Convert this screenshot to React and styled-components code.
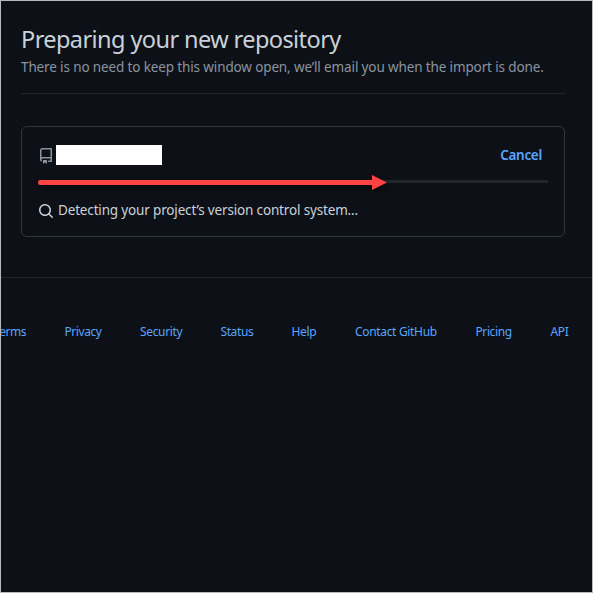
import React from "react";
import styled, { createGlobalStyle } from "styled-components";

const GlobalStyle = createGlobalStyle`
  * { box-sizing: border-box; }
  body { margin: 0; background: #0d1117; }
`;

const Page = styled.div`
  width: 593px;
  height: 593px;
  overflow: hidden;
  background: #0d1117;
  border: 1px solid #b9b9b9;
  color: #c9d1d9;
  font-family: "Noto Sans", "Open Sans", sans-serif;
  font-size: 14px;
  line-height: 20px;
`;

const Main = styled.main`
  width: 544px;
  margin-left: 20px;
  padding-top: 21px;
`;

const Header = styled.header`
  height: 72px;
  border-bottom: 1px solid #21262d;
  white-space: nowrap;
`;

const Title = styled.h1`
  margin: 0;
  font-size: 23.5px;
  font-weight: 400;
  line-height: 35px;
  letter-spacing: -0.58px;
`;

const Subtitle = styled.p`
  margin: 0;
  color: #8b949e;
  font-size: 13.5px;
  letter-spacing: -0.13px;
`;

const Card = styled.section`
  height: 111px;
  margin-top: 32px;
  padding: 18px 16px 0;
  border: 1px solid #30363d;
  border-radius: 6px;
`;

const RepoRow = styled.div`
  display: flex;
  align-items: center;
  height: 20px;
`;

const RepoIcon = styled.svg`
  width: 16px;
  height: 16px;
  margin-top: 2px;
  fill: #8b949e;
`;

const RepoName = styled.span`
  width: 106px;
  height: 20px;
  margin-left: 2px;
  background: #fff;
`;

const CancelButton = styled.button`
  margin-left: auto;
  margin-right: 6px;
  padding: 0;
  border: 0;
  background: none;
  color: #58a6ff;
  font: inherit;
  font-size: 13.5px;
  font-weight: 600;
  letter-spacing: -0.3px;
`;

const Progress = styled.div`
  height: 3px;
  margin-top: 15px;
  background: #21262d;
`;

const Arrow = styled.svg`
  display: block;
  width: 360px;
  height: 30px;
  overflow: visible;
  fill: #ff4343;
  filter: drop-shadow(1px 3px 3px rgba(0, 0, 0, 0.7));
`;

const StatusRow = styled.div`
  display: flex;
  align-items: center;
  height: 20px;
  margin-top: 18px;
  white-space: nowrap;
`;

const SearchIcon = styled.svg`
  width: 16px;
  height: 16px;
  margin-right: 4px;
  fill: #c9d1d9;
`;

const StatusText = styled.span`
  padding-bottom: 2px;
  font-size: 13.5px;
  letter-spacing: -0.16px;
`;

const Footer = styled.footer`
  margin-top: 40px;
  padding-top: 44px;
  border-top: 1px solid #21262d;
`;

const FooterLinks = styled.nav`
  display: flex;
  margin-left: -7px;
`;

const FooterLink = styled.a`
  flex: none;
  width: ${({ $slot }) => $slot}px;
  color: #58a6ff;
  font-size: 12px;
  letter-spacing: ${({ $tracking }) => $tracking}px;
  white-space: nowrap;
`;

const links = [
  { label: "Terms", slot: 70.5, tracking: -0.5 },
  { label: "Privacy", slot: 75.5, tracking: -0.43 },
  { label: "Security", slot: 80.5, tracking: -0.35 },
  { label: "Status", slot: 71, tracking: -0.4 },
  { label: "Help", slot: 63.5, tracking: -0.3 },
  { label: "Contact GitHub", slot: 120.5, tracking: -0.33 },
  { label: "Pricing", slot: 75, tracking: -0.4 },
  { label: "API", slot: 30, tracking: -0.4 },
];

export default function App() {
  return (
    <Page>
      <GlobalStyle />
      <Main>
        <Header>
          <Title>Preparing your new repository</Title>
          <Subtitle>
            There is no need to keep this window open, we’ll email you when the import is done.
          </Subtitle>
        </Header>
        <Card>
          <RepoRow>
            <RepoIcon viewBox="0 0 16 16">
              <path
                fillRule="evenodd"
                d="M2 2.5A2.5 2.5 0 014.5 0h8.75a.75.75 0 01.75.75v12.5a.75.75 0 01-.75.75h-2.5a.75.75 0 110-1.5h1.75v-2h-8a1 1 0 00-.714 1.7.75.75 0 01-1.072 1.05A2.495 2.495 0 012 11.5v-9zm10.5-1V9h-8c-.356 0-.694.074-1 .208V2.5a1 1 0 011-1h8zM5 12.25v3.25a.25.25 0 00.4.2l1.45-1.087a.25.25 0 01.3 0L8.6 15.7a.25.25 0 00.4-.2v-3.25a.25.25 0 00-.25-.25h-3.5a.25.25 0 00-.25.25z"
              />
            </RepoIcon>
            <RepoName />
            <CancelButton>Cancel</CancelButton>
          </RepoRow>
          <Progress>
            <Arrow viewBox="0 0 360 30">
              <path d="M2.5 0H334V-5L349 2.5L334 10V5H2.5A2.5 2.5 0 010 2.5A2.5 2.5 0 012.5 0z" />
            </Arrow>
          </Progress>
          <StatusRow>
            <SearchIcon viewBox="0 0 16 16">
              <path
                fillRule="evenodd"
                d="M11.5 7a4.499 4.499 0 11-8.998 0A4.499 4.499 0 0111.5 7zm-.82 4.74a6 6 0 111.06-1.06l3.04 3.04a.75.75 0 11-1.06 1.06l-3.04-3.04z"
              />
            </SearchIcon>
            <StatusText>Detecting your project’s version control system...</StatusText>
          </StatusRow>
        </Card>
      </Main>
      <Footer>
        <FooterLinks>
          {links.map(({ label, slot, tracking }) => (
            <FooterLink key={label} $slot={slot} $tracking={tracking}>
              {label}
            </FooterLink>
          ))}
        </FooterLinks>
      </Footer>
    </Page>
  );
}
